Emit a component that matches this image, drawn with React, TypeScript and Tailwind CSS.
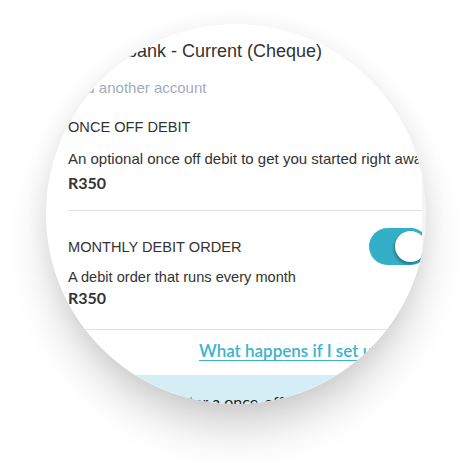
import React from "react";

// ── Debit order options, shown inside a round "magnifier" crop ───────────────

const BODY = "font-['Liberation_Sans',Arial,sans-serif]";
const GEO = "font-['Lato','Open_Sans',sans-serif]";

function Divider({ inset }: { inset?: boolean }) {
  return <div className={`h-px bg-[#dfe4ea] ${inset ? "ml-[22px]" : ""}`} />;
}

function Toggle({ on }: { on: boolean }) {
  return (
    <div
      className={`relative w-[60px] h-[37px] shrink-0 rounded-full ${on ? "bg-[#34afc7]" : "bg-[#d9dee4]"}`}
    >
      <div className="absolute top-[3px] left-[26px] w-[31px] h-[31px] rounded-full bg-white shadow-[-1px_2px_3px_rgba(0,0,0,0.35)]" />
    </div>
  );
}

export default function App() {
  return (
    <div className="w-[468px] h-[468px] bg-white pt-[24px] pl-[46px] overflow-hidden">
      <div className="w-[380px] h-[380px] rounded-full overflow-hidden bg-[#f4f4f4] shadow-[0_28px_46px_-6px_rgba(0,0,0,0.2),0_0_24px_rgba(0,0,0,0.05)]">
        <div className="w-[376px] h-full bg-white overflow-hidden">
          <div className={`w-[383px] pt-[15px] text-[#333] ${BODY}`}>
            {/* selected account */}
            <div className="flex h-[24px] items-center pl-[22px]">
              <div className="w-[53px] shrink-0" />
              <div className="overflow-hidden">
                <span className="block -ml-[27px] whitespace-nowrap text-[18px] leading-[24px]">
                  Nedbank - Current (Cheque)
                </span>
              </div>
            </div>
            <div className="mt-[15px] pl-[22px] h-[20px] text-[15px] leading-[20px] text-[#a3acb9] whitespace-nowrap">
              Add another account
            </div>

            {/* once off */}
            <div className="mt-[19px] pl-[22px] h-[20px] text-[14.6px] leading-[20px] whitespace-nowrap">
              ONCE OFF DEBIT
            </div>
            <div className="mt-[12px] pl-[22px] h-[20px] text-[15px] leading-[20px] whitespace-nowrap">
              An optional once off debit to get you started right away
            </div>
            <div className={`mt-[4px] pl-[22px] h-[20px] text-[16px] leading-[20px] font-bold ${GEO}`}>R350</div>
            <div className="mt-[17px]">
              <Divider inset />
            </div>

            {/* monthly */}
            <div className="mt-[17px] pl-[22px] flex h-[37px] items-center justify-between">
              <span className="text-[14.6px] leading-[20px] whitespace-nowrap">MONTHLY DEBIT ORDER</span>
              <Toggle on />
            </div>
            <div className="mt-[2px] pl-[22px] h-[20px] text-[14.6px] leading-[20px] whitespace-nowrap">
              A debit order that runs every month
            </div>
            <div className={`mt-[1px] pl-[22px] h-[20px] text-[16px] leading-[20px] font-bold ${GEO}`}>R350</div>
            <div className="mt-[21px]">
              <Divider />
            </div>

            <div className="mt-[10px] pl-[153px] h-[20px] whitespace-nowrap">
              <a className={`text-[17px] leading-[20px] font-semibold text-[#3ab4cc] underline underline-offset-[3px] decoration-1 ${GEO}`}>
                What happens if I set up a once off debit?
              </a>
            </div>

            {/* info band */}
            <div className="mt-[15px] h-[80px] bg-[#d5eef5] pt-[17px] pl-[76px]">
              <div className={`text-[16px] leading-[20px] text-[#222] whitespace-nowrap ${GEO}`}>
                Please enter a once-off amount
              </div>
            </div>
          </div>
        </div>
      </div>
    </div>
  );
}
